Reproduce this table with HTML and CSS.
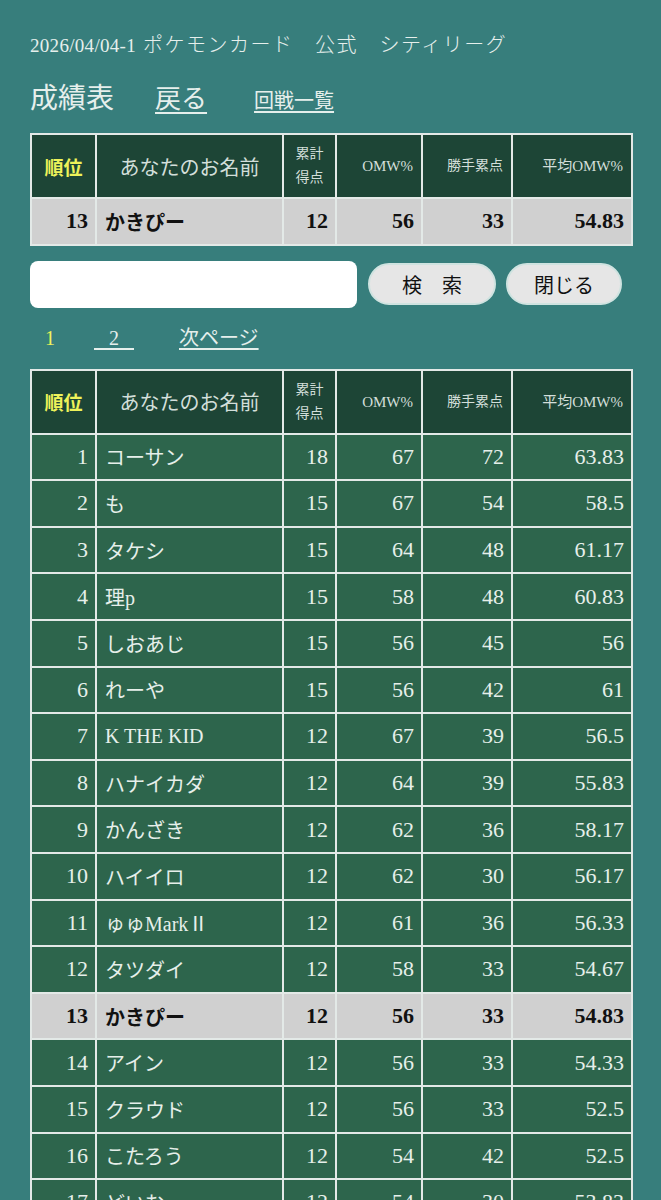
FILE: index.html
```html
<!DOCTYPE html>
<html lang="ja">
<head>
<meta charset="utf-8">
<title>成績表</title>
<link rel="stylesheet" href="styles.css">
</head>
<body>
<div class="page">
  <div class="event">2026/04/04-1 <span class="event-jp">ポケモンカード　公式　シティリーグ</span></div>
  <div class="nav">
    <span class="heading">成績表</span>
    <a class="back" href="#">戻る</a>
    <a class="rounds" href="#">回戦一覧</a>
  </div>

  <table class="results">
    <colgroup>
      <col class="c-rank"><col class="c-name"><col class="c-pts"><col class="c-omw"><col class="c-kp"><col class="c-avg">
    </colgroup>
    <thead>
      <tr>
        <th class="h-rank">順位</th>
        <th class="h-name">あなたのお名前</th>
        <th class="h-small">累計<br>得点</th>
        <th class="h-small h-right h-latin">OMW%</th>
        <th class="h-small h-right">勝手累点</th>
        <th class="h-small h-right h-latin">平均OMW%</th>
      </tr>
    </thead>
    <tbody>
      <tr class="me"><td class="num">13</td><td class="name">かきぴー</td><td class="num">12</td><td class="num">56</td><td class="num">33</td><td class="num">54.83</td></tr>
    </tbody>
  </table>

  <div class="search">
    <input class="search-box" type="text">
    <button class="btn btn-search">検　索</button>
    <button class="btn btn-close">閉じる</button>
  </div>

  <div class="pager">
    <span class="current">1</span>
    <a class="page-link" href="#">&nbsp;&nbsp;&nbsp;2&nbsp;&nbsp;&nbsp;</a>
    <a class="next" href="#">次ページ</a>
  </div>

  <table class="results results-main">
    <colgroup>
      <col class="c-rank"><col class="c-name"><col class="c-pts"><col class="c-omw"><col class="c-kp"><col class="c-avg">
    </colgroup>
    <thead>
      <tr>
        <th class="h-rank">順位</th>
        <th class="h-name">あなたのお名前</th>
        <th class="h-small">累計<br>得点</th>
        <th class="h-small h-right h-latin">OMW%</th>
        <th class="h-small h-right">勝手累点</th>
        <th class="h-small h-right h-latin">平均OMW%</th>
      </tr>
    </thead>
    <tbody>
      <tr><td class="num">1</td><td class="name">コーサン</td><td class="num">18</td><td class="num">67</td><td class="num">72</td><td class="num">63.83</td></tr>
      <tr><td class="num">2</td><td class="name">も</td><td class="num">15</td><td class="num">67</td><td class="num">54</td><td class="num">58.5</td></tr>
      <tr><td class="num">3</td><td class="name">タケシ</td><td class="num">15</td><td class="num">64</td><td class="num">48</td><td class="num">61.17</td></tr>
      <tr><td class="num">4</td><td class="name">理p</td><td class="num">15</td><td class="num">58</td><td class="num">48</td><td class="num">60.83</td></tr>
      <tr><td class="num">5</td><td class="name">しおあじ</td><td class="num">15</td><td class="num">56</td><td class="num">45</td><td class="num">56</td></tr>
      <tr><td class="num">6</td><td class="name">れーや</td><td class="num">15</td><td class="num">56</td><td class="num">42</td><td class="num">61</td></tr>
      <tr><td class="num">7</td><td class="name">K THE KID</td><td class="num">12</td><td class="num">67</td><td class="num">39</td><td class="num">56.5</td></tr>
      <tr><td class="num">8</td><td class="name">ハナイカダ</td><td class="num">12</td><td class="num">64</td><td class="num">39</td><td class="num">55.83</td></tr>
      <tr><td class="num">9</td><td class="name">かんざき</td><td class="num">12</td><td class="num">62</td><td class="num">36</td><td class="num">58.17</td></tr>
      <tr><td class="num">10</td><td class="name">ハイイロ</td><td class="num">12</td><td class="num">62</td><td class="num">30</td><td class="num">56.17</td></tr>
      <tr><td class="num">11</td><td class="name">ゅゅMarkⅡ</td><td class="num">12</td><td class="num">61</td><td class="num">36</td><td class="num">56.33</td></tr>
      <tr><td class="num">12</td><td class="name">タツダイ</td><td class="num">12</td><td class="num">58</td><td class="num">33</td><td class="num">54.67</td></tr>
      <tr class="me"><td class="num">13</td><td class="name">かきぴー</td><td class="num">12</td><td class="num">56</td><td class="num">33</td><td class="num">54.83</td></tr>
      <tr><td class="num">14</td><td class="name">アイン</td><td class="num">12</td><td class="num">56</td><td class="num">33</td><td class="num">54.33</td></tr>
      <tr><td class="num">15</td><td class="name">クラウド</td><td class="num">12</td><td class="num">56</td><td class="num">33</td><td class="num">52.5</td></tr>
      <tr><td class="num">16</td><td class="name">こたろう</td><td class="num">12</td><td class="num">54</td><td class="num">42</td><td class="num">52.5</td></tr>
      <tr><td class="num">17</td><td class="name">どいむ</td><td class="num">12</td><td class="num">54</td><td class="num">30</td><td class="num">53.83</td></tr>
    </tbody>
  </table>
</div>
</body>
</html>
```

FILE: styles.css
```css
html, body {
  margin: 0;
  padding: 0;
  background: #377e7c;
}

body {
  font-family: "Liberation Serif", "Noto Sans CJK JP", serif;
  color: #e6efec;
}

.page {
  padding: 33px 29px 0 30px;
}

.event {
  font-size: 19px;
  line-height: 24px;
  letter-spacing: 0.3px;
  font-weight: 300;
}

.event-jp {
  font-size: 20px;
  letter-spacing: 1.5px;
  margin-left: 2px;
}

.nav {
  display: flex;
  align-items: baseline;
  margin-top: 20px;
  height: 40px;
}

.heading {
  font-size: 28px;
  line-height: 36px;
}

.nav a {
  color: #e6efec;
}

.back {
  font-size: 26px;
  margin-left: 41px;
  text-underline-offset: 4px;
}

.rounds {
  font-size: 20px;
  margin-left: 47px;
  text-underline-offset: 3px;
}

.results {
  width: 603px;
  table-layout: fixed;
  border-collapse: separate;
  border-spacing: 2px;
  background: #e3e9e7;
  margin-top: 15px;
}

.results-main {
  margin-top: 18px;
}

.c-rank { width: 63px; }
.c-name { width: 185px; }
.c-pts { width: 51px; }
.c-omw { width: 84px; }
.c-kp { width: 88px; }
.c-avg { width: 118px; }

.results th {
  background: #1d4536;
  height: 62px;
  padding: 0;
  font-weight: normal;
  color: #d3dfda;
  vertical-align: middle;
}

.results th.h-rank {
  color: #eef25a;
  font-weight: bold;
  font-size: 19px;
}

.results th.h-name {
  font-size: 20px;
}

.results th.h-small {
  font-size: 14px;
  line-height: 24px;
}

.results th.h-latin {
  font-size: 15px;
}

.results th.h-right {
  text-align: right;
  padding-right: 8px;
}

.results td {
  background: #2d654c;
  height: 44.6px;
  padding: 0;
  color: #e6efea;
  font-size: 22px;
  vertical-align: middle;
}

.results td.num {
  text-align: right;
  padding-right: 7px;
}

.results td.name {
  padding-left: 8px;
  font-size: 20px;
  white-space: nowrap;
  overflow: hidden;
}

.results tr.me td {
  background: #d0d0d0;
  color: #111;
  font-weight: bold;
}

.search {
  display: flex;
  align-items: center;
  margin-top: 15px;
}

.search-box {
  width: 327px;
  height: 47px;
  box-sizing: border-box;
  border: none;
  border-radius: 8px;
  background: #fff;
  margin: 0;
}

.btn {
  height: 42px;
  box-sizing: border-box;
  border: 2px solid #cfe3e0;
  border-radius: 21px;
  background: #e6e6e6;
  font-family: "Noto Sans CJK JP", sans-serif;
  font-size: 20px;
  color: #111;
  padding: 0;
}

.btn-search {
  width: 128px;
  margin-left: 11px;
}

.btn-close {
  width: 116px;
  margin-left: 10px;
}

.pager {
  display: flex;
  align-items: baseline;
  margin-top: 17px;
  font-size: 20px;
  line-height: 26px;
}

.pager a {
  color: #e6efec;
  text-underline-offset: 3px;
}

.current {
  color: #eef25a;
  margin-left: 15px;
}

.page-link {
  margin-left: 39px;
}

.next {
  margin-left: 45px;
}
```
